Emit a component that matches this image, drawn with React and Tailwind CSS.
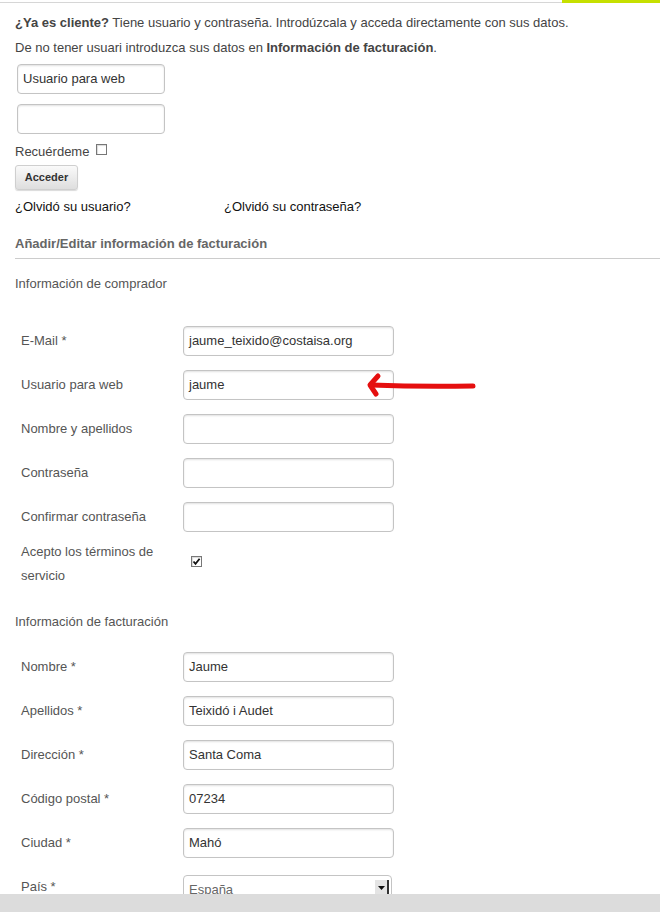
import React from 'react';

const font = { fontFamily: '"Liberation Sans", Arial, sans-serif' };

const TextInput = ({ value = '', className = '' }) => (
  <div
    className={`h-[30px] rounded-[4px] border border-[#c4c4c4] bg-white shadow-[inset_0_1px_2px_rgba(0,0,0,0.12)] flex items-center px-[5px] text-[13px] text-[#333] ${className}`}
  >
    {value}
  </div>
);

const Row = ({ label, value, children }) => (
  <div className="relative flex h-[44px] items-center">
    <div className="w-[168px] pl-[6px] text-[13px] text-[#555]">{label}</div>
    <TextInput value={value} className="w-[211px]" />
    {children}
  </div>
);

const Checkbox = ({ checked }) => (
  <span className="inline-flex h-[11px] w-[11px] items-center justify-center border border-[#777] bg-white shadow-[inset_1px_1px_1px_rgba(0,0,0,0.15)]">
    {checked && (
      <svg width="9" height="9" viewBox="0 0 9 9">
        <path d="M1.5 4.5 L3.5 6.8 L7.6 1.8" fill="none" stroke="#111" strokeWidth="1.8" />
      </svg>
    )}
  </span>
);

// annotation drawn over the form
const RedArrow = () => (
  <svg className="absolute left-[350px] top-[9px]" width="114" height="26" viewBox="0 0 114 26">
    <path d="M6 13 C30 14, 60 15, 108 14" fill="none" stroke="#e50f0f" strokeWidth="5" strokeLinecap="round" />
    <path d="M13 4 L5 13 L11 22" fill="none" stroke="#e50f0f" strokeWidth="5" strokeLinecap="round" strokeLinejoin="round" />
  </svg>
);

export default function App() {
  return (
    <div className="flex h-screen flex-col overflow-hidden bg-white" style={font}>
      <main className="flex-1 overflow-hidden">
        <div className="flex h-[3px]">
          <div className="flex-1 border-b border-[#d6d6d6]" />
          <div className="w-[98px] bg-[#c6e000]" />
        </div>

        <div className="px-[15px] pt-[7px] text-[13px] leading-[25px] text-[#444]">
          <p>
            <b className="text-[#444]">¿Ya es cliente?</b> Tiene usuario y contraseña. Introdúzcala y acceda directamente con sus datos.
          </p>
          <p>
            De no tener usuari introduzca sus datos en <b>Información de facturación</b>.
          </p>
        </div>

        <div className="pl-[17px] pt-[4px]">
          <TextInput value="Usuario para web" className="w-[148px]" />
          <TextInput className="mt-[10px] w-[148px]" />
        </div>

        <div className="px-[15px]">
          <div className="flex h-[30px] items-center gap-[7px] pt-[6px] text-[13px] text-[#444]">
            <span>Recuérdeme</span>
            <span className="-mt-[3px]">
              <Checkbox />
            </span>
          </div>
          <button
            type="button"
            className="mt-[1px] h-[25px] w-[63px] rounded-[3px] border border-[#cfcfcf] bg-gradient-to-b from-[#fafafa] to-[#dedede] text-[11px] font-bold text-[#333] shadow-[0_1px_1px_rgba(0,0,0,0.15)]"
          >
            Acceder
          </button>
          <div className="flex h-[24px] items-center pt-[10px] text-[13px] text-[#111]">
            <span className="w-[209px]">¿Olvidó su usuario?</span>
            <span>¿Olvidó su contraseña?</span>
          </div>
        </div>

        <div className="ml-[15px] mt-[22px] border-b border-[#cccccc] pb-[6px] text-[13px] font-bold leading-[16px] text-[#666]">
          Añadir/Editar información de facturación
        </div>

        <div className="px-[15px] pt-[17px] text-[13px] leading-[16px] text-[#555]">Información de comprador</div>

        <div className="pl-[15px] pt-[27px]">
          <Row label="E-Mail *" value="jaume_teixido@costaisa.org" />
          <Row label="Usuario para web" value="jaume">
            <RedArrow />
          </Row>
          <Row label="Nombre y apellidos" />
          <Row label="Contraseña" />
          <Row label="Confirmar contraseña" />
          <div className="flex pt-[1px]">
            <div className="w-[168px] pl-[6px] text-[13px] leading-[24px] text-[#555]">
              Acepto los términos de
              <br />
              servicio
            </div>
            <div className="pl-[8px] pt-[9px]">
              <Checkbox checked />
            </div>
          </div>
        </div>

        <div className="px-[15px] pt-[26px] text-[13px] leading-[16px] text-[#555]">Información de facturación</div>

        <div className="pl-[15px] pt-[15px]">
          <Row label="Nombre *" value="Jaume" />
          <Row label="Apellidos *" value="Teixidó i Audet" />
          <Row label="Dirección *" value="Santa Coma" />
          <Row label="Código postal *" value="07234" />
          <Row label="Ciudad *" value="Mahó" />
          <div className="flex h-[44px] items-center">
            <div className="w-[168px] pl-[6px] text-[13px] text-[#555]">País *</div>
            <div className="mt-[6px] flex h-[30px] w-[209px] items-start justify-between rounded-[4px] border border-[#c4c4c4] bg-white pl-[5px] pr-[2px] pt-[4px] text-[13px] text-[#666]">
              <span>España</span>
              <span className="flex h-[15px] w-[14px] items-center justify-center border-r-2 border-[#333] bg-[#e4e4e4]">
                <svg width="7" height="4" viewBox="0 0 7 4">
                  <path d="M0 0 L7 0 L3.5 4 Z" fill="#111" />
                </svg>
              </span>
            </div>
          </div>
        </div>
      </main>
      <div className="h-[18px] shrink-0 bg-[#dcdcdc]" />
    </div>
  );
}
